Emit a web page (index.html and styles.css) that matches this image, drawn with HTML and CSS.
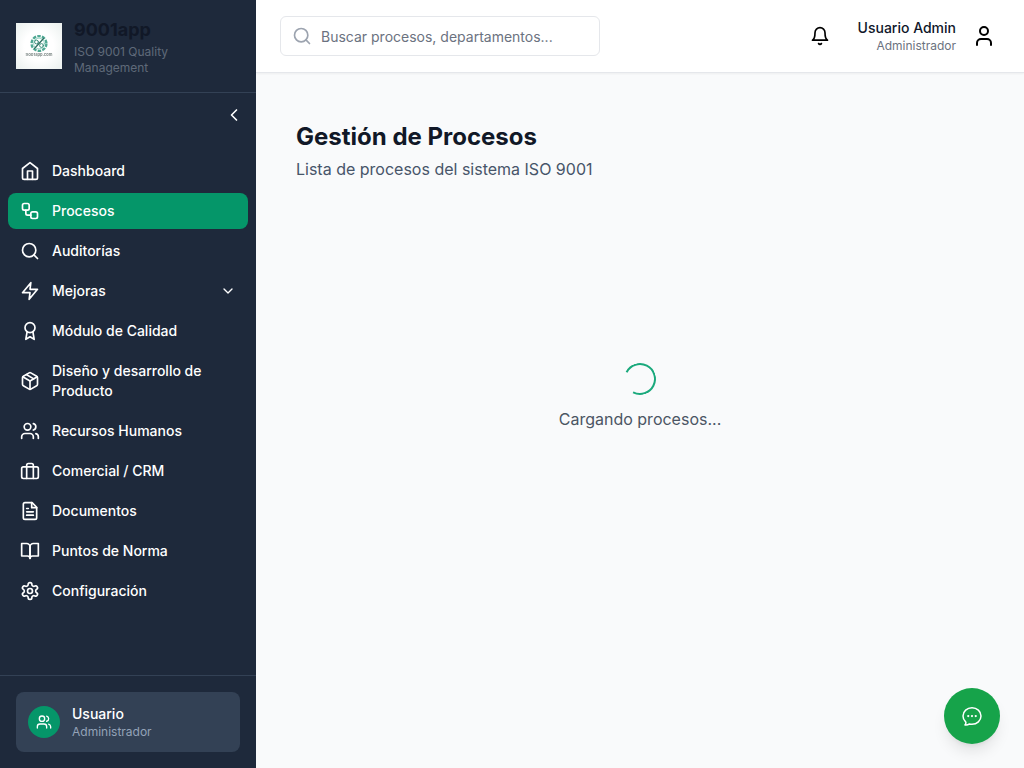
FILE: index.html
```html
<!DOCTYPE html>
<html lang="es">
<head>
    <meta charset="UTF-8">
    <meta name="viewport" content="width=device-width, initial-scale=1.0">
    <title>9001app - Procesos</title>
    <link rel="stylesheet" href="styles.css">
</head>
<body>

    <!-- Sidebar -->
    <aside class="sidebar">
        <div class="brand">
            <div class="brand-logo">
                <svg viewBox="0 0 46 46" width="46" height="46">
                    <circle class="logo-gear" cx="23" cy="20.5" r="7.4"/>
                    <circle class="logo-ring" cx="23" cy="20.5" r="5.4"/>
                    <path class="logo-bar" d="M18.5 25.5 27.5 15.5"/>
                    <circle class="logo-dot" cx="20.5" cy="19" r="1.9"/>
                    <circle class="logo-dot" cx="25.5" cy="22.5" r="1.9"/>
                    <text x="23" y="33" class="brand-logo-text">9001app.com</text>
                </svg>
            </div>
            <div class="brand-text">
                <div class="brand-name">9001app</div>
                <div class="brand-sub">ISO 9001 Quality Management</div>
            </div>
        </div>

        <div class="collapse-row">
            <svg class="icon" viewBox="0 0 24 24"><path d="m15 18-6-6 6-6"/></svg>
        </div>

        <nav class="menu">
            <a class="menu-item" href="#">
                <svg class="icon" viewBox="0 0 24 24"><path d="m3 9 9-7 9 7v11a2 2 0 0 1-2 2H5a2 2 0 0 1-2-2z"/><polyline points="9 22 9 12 15 12 15 22"/></svg>
                <span>Dashboard</span>
            </a>
            <a class="menu-item active" href="#">
                <svg class="icon" viewBox="0 0 24 24"><rect width="8" height="8" x="3" y="3" rx="2"/><path d="M7 11v4a2 2 0 0 0 2 2h4"/><rect width="8" height="8" x="13" y="13" rx="2"/></svg>
                <span>Procesos</span>
            </a>
            <a class="menu-item" href="#">
                <svg class="icon" viewBox="0 0 24 24"><circle cx="11" cy="11" r="8"/><path d="m21 21-4.3-4.3"/></svg>
                <span>Auditorías</span>
            </a>
            <a class="menu-item" href="#">
                <svg class="icon" viewBox="0 0 24 24"><polygon points="13 2 3 14 12 14 11 22 21 10 12 10 13 2"/></svg>
                <span>Mejoras</span>
                <svg class="icon-sm menu-caret" viewBox="0 0 24 24"><path d="m6 9 6 6 6-6"/></svg>
            </a>
            <a class="menu-item" href="#">
                <svg class="icon" viewBox="0 0 24 24"><circle cx="12" cy="8" r="6"/><path d="M15.477 12.89 17 22l-5-3-5 3 1.523-9.11"/></svg>
                <span>Módulo de Calidad</span>
            </a>
            <a class="menu-item" href="#">
                <svg class="icon" viewBox="0 0 24 24"><path d="m7.5 4.27 9 5.15"/><path d="M21 8a2 2 0 0 0-1-1.73l-7-4a2 2 0 0 0-2 0l-7 4A2 2 0 0 0 3 8v8a2 2 0 0 0 1 1.73l7 4a2 2 0 0 0 2 0l7-4A2 2 0 0 0 21 16Z"/><path d="m3.3 7 8.7 5 8.7-5"/><path d="M12 22V12"/></svg>
                <span>Diseño y desarrollo de Producto</span>
            </a>
            <a class="menu-item" href="#">
                <svg class="icon" viewBox="0 0 24 24"><path d="M16 21v-2a4 4 0 0 0-4-4H6a4 4 0 0 0-4 4v2"/><circle cx="9" cy="7" r="4"/><path d="M22 21v-2a4 4 0 0 0-3-3.87"/><path d="M16 3.13a4 4 0 0 1 0 7.75"/></svg>
                <span>Recursos Humanos</span>
            </a>
            <a class="menu-item" href="#">
                <svg class="icon" viewBox="0 0 24 24"><rect width="20" height="14" x="2" y="7" rx="2" ry="2"/><path d="M16 21V5a2 2 0 0 0-2-2h-4a2 2 0 0 0-2 2v16"/></svg>
                <span>Comercial / CRM</span>
            </a>
            <a class="menu-item" href="#">
                <svg class="icon" viewBox="0 0 24 24"><path d="M14.5 2H6a2 2 0 0 0-2 2v16a2 2 0 0 0 2 2h12a2 2 0 0 0 2-2V7.5L14.5 2z"/><polyline points="14 2 14 8 20 8"/><line x1="16" x2="8" y1="13" y2="13"/><line x1="16" x2="8" y1="17" y2="17"/><line x1="10" x2="8" y1="9" y2="9"/></svg>
                <span>Documentos</span>
            </a>
            <a class="menu-item" href="#">
                <svg class="icon" viewBox="0 0 24 24"><path d="M2 3h6a4 4 0 0 1 4 4v14a3 3 0 0 0-3-3H2z"/><path d="M22 3h-6a4 4 0 0 0-4 4v14a3 3 0 0 1 3-3h7z"/></svg>
                <span>Puntos de Norma</span>
            </a>
            <a class="menu-item" href="#">
                <svg class="icon" viewBox="0 0 24 24"><path d="M12.22 2h-.44a2 2 0 0 0-2 2v.18a2 2 0 0 1-1 1.73l-.43.25a2 2 0 0 1-2 0l-.15-.08a2 2 0 0 0-2.73.73l-.22.38a2 2 0 0 0 .73 2.73l.15.1a2 2 0 0 1 1 1.72v.51a2 2 0 0 1-1 1.74l-.15.09a2 2 0 0 0-.73 2.73l.22.38a2 2 0 0 0 2.73.73l.15-.08a2 2 0 0 1 2 0l.43.25a2 2 0 0 1 1 1.73V20a2 2 0 0 0 2 2h.44a2 2 0 0 0 2-2v-.18a2 2 0 0 1 1-1.73l.43-.25a2 2 0 0 1 2 0l.15.08a2 2 0 0 0 2.73-.73l.22-.39a2 2 0 0 0-.73-2.73l-.15-.08a2 2 0 0 1-1-1.74v-.5a2 2 0 0 1 1-1.74l.15-.09a2 2 0 0 0 .73-2.73l-.22-.38a2 2 0 0 0-2.73-.73l-.15.08a2 2 0 0 1-2 0l-.43-.25a2 2 0 0 1-1-1.73V4a2 2 0 0 0-2-2z"/><circle cx="12" cy="12" r="3"/></svg>
                <span>Configuración</span>
            </a>
        </nav>

        <div class="sidebar-footer">
            <div class="user-card">
                <div class="user-avatar">
                    <svg class="icon-sm" viewBox="0 0 24 24"><path d="M16 21v-2a4 4 0 0 0-4-4H6a4 4 0 0 0-4 4v2"/><circle cx="9" cy="7" r="4"/><path d="M22 21v-2a4 4 0 0 0-3-3.87"/><path d="M16 3.13a4 4 0 0 1 0 7.75"/></svg>
                </div>
                <div>
                    <div class="user-card-name">Usuario</div>
                    <div class="user-card-role">Administrador</div>
                </div>
            </div>
        </div>
    </aside>

    <div class="page">
        <!-- Top bar -->
        <header class="topbar">
            <label class="search">
                <svg class="search-icon" viewBox="0 0 24 24"><circle cx="11" cy="11" r="8"/><path d="m21 21-4.3-4.3"/></svg>
                <input type="text" placeholder="Buscar procesos, departamentos...">
            </label>
            <div class="topbar-right">
                <svg class="icon" viewBox="0 0 24 24"><path d="M6 8a6 6 0 0 1 12 0c0 7 3 9 3 9H3s3-2 3-9"/><path d="M10.3 21a1.94 1.94 0 0 0 3.4 0"/></svg>
                <div class="topbar-user">
                    <div class="topbar-user-name">Usuario Admin</div>
                    <div class="topbar-user-role">Administrador</div>
                </div>
                <svg class="icon-lg" viewBox="0 0 24 24"><path d="M19 21v-2a4 4 0 0 0-4-4H9a4 4 0 0 0-4 4v2"/><circle cx="12" cy="7" r="4"/></svg>
            </div>
        </header>

        <main class="content">
            <h1>Gestión de Procesos</h1>
            <p class="subtitle">Lista de procesos del sistema ISO 9001</p>

            <div class="loading">
                <div class="spinner"></div>
                <p>Cargando procesos...</p>
            </div>
        </main>
    </div>

    <button class="chat-btn" type="button" aria-label="Chat">
        <svg viewBox="0 0 24 24"><path d="M8.625 12a.375.375 0 1 1-.75 0 .375.375 0 0 1 .75 0Zm0 0H8.25m4.125 0a.375.375 0 1 1-.75 0 .375.375 0 0 1 .75 0Zm0 0H12m4.125 0a.375.375 0 1 1-.75 0 .375.375 0 0 1 .75 0Zm0 0h-.375M21 12c0 4.556-4.03 8.25-9 8.25a9.764 9.764 0 0 1-2.555-.337A5.972 5.972 0 0 1 5.41 20.97a5.969 5.969 0 0 1-.474-.065 4.48 4.48 0 0 0 .978-2.025c.09-.457-.133-.901-.467-1.226C3.93 16.178 3 14.189 3 12c0-4.556 4.03-8.25 9-8.25s9 3.694 9 8.25Z"/></svg>
    </button>

</body>
</html>
```

FILE: styles.css
```css
* {
    box-sizing: border-box;
}

html {
    background-color: #f9fafb;
}

body {
    font-family: Inter, "Liberation Sans", sans-serif;
    background-color: #f9fafb;
    margin: 0;
    height: 768px;
    display: flex;
}

svg {
    fill: none;
    stroke: currentColor;
    stroke-width: 2;
    stroke-linecap: round;
    stroke-linejoin: round;
    flex-shrink: 0;
}

.icon {
    width: 20px;
    height: 20px;
}

.icon-sm {
    width: 16px;
    height: 16px;
}

.icon-lg {
    width: 24px;
    height: 24px;
}

/* Sidebar */
.sidebar {
    width: 256px;
    flex-shrink: 0;
    background-color: #1e293b;
    color: white;
    display: flex;
    flex-direction: column;
}

.brand {
    height: 93px;
    padding: 0 16px;
    display: flex;
    align-items: center;
    gap: 12px;
    border-bottom: 1px solid #334155;
}

.brand-logo {
    width: 46px;
    height: 46px;
    flex-shrink: 0;
    background: radial-gradient(circle, #ffffff 45%, #eaf0ee 100%);
}

.brand-logo svg {
    display: block;
    filter: blur(0.4px);
}

.logo-gear {
    stroke: #4fa893;
    stroke-width: 2.4;
    stroke-dasharray: 3.5 1.2;
    stroke-linecap: butt;
}

.logo-ring {
    stroke: #7cc9b4;
    stroke-width: 0.8;
}

.logo-bar {
    stroke: #2f6f61;
    stroke-width: 1.3;
}

.logo-dot {
    stroke: #3f8f7c;
    stroke-width: 1;
}

.brand-logo-text {
    font-size: 4px;
    font-weight: 700;
    fill: #7d8886;
    stroke: none;
    text-anchor: middle;
}

.brand-name {
    font-size: 18px;
    line-height: 28px;
    font-weight: 700;
    color: #111827;
}

.brand-sub {
    font-size: 12px;
    line-height: 16px;
    color: #5f6979;
}

.collapse-row {
    display: flex;
    justify-content: flex-end;
    padding: 12px 12px 0;
    height: 60px;
}

.menu {
    padding: 0 8px;
    display: flex;
    flex-direction: column;
    gap: 4px;
}

.menu-item {
    display: flex;
    align-items: center;
    gap: 12px;
    padding: 8px 12px;
    border-radius: 8px;
    color: white;
    text-decoration: none;
    font-size: 14px;
    line-height: 20px;
    font-weight: 500;
}

.menu-item.active {
    background-color: #059669;
}

.menu-caret {
    margin-left: auto;
}

.sidebar-footer {
    margin-top: auto;
    padding: 16px;
    border-top: 1px solid #334155;
}

.user-card {
    height: 60px;
    padding: 0 12px;
    display: flex;
    align-items: center;
    gap: 12px;
    border-radius: 8px;
    background-color: #334155;
}

.user-avatar {
    width: 32px;
    height: 32px;
    border-radius: 50%;
    background-color: #059669;
    display: flex;
    align-items: center;
    justify-content: center;
}

.user-card-name {
    font-size: 14px;
    line-height: 20px;
    font-weight: 500;
}

.user-card-role {
    font-size: 12px;
    line-height: 16px;
    color: #94a3b8;
}

/* Top bar and content */
.page {
    flex: 1;
    min-width: 0;
    display: flex;
    flex-direction: column;
}

.topbar {
    height: 73px;
    padding: 0 28px 0 24px;
    display: flex;
    align-items: center;
    justify-content: space-between;
    background-color: white;
    border-bottom: 1px solid #e5e7eb;
    box-shadow: 0 1px 2px rgba(0, 0, 0, 0.05);
}

.search {
    width: 320px;
    height: 40px;
    padding: 0 12px 0 11px;
    display: flex;
    align-items: center;
    gap: 9px;
    background-color: white;
    border: 1px solid #e5e7eb;
    border-radius: 6px;
}

.search-icon {
    width: 20px;
    height: 20px;
    color: #9ca3af;
}

.search input {
    flex: 1;
    min-width: 0;
    border: none;
    outline: none;
    padding: 0;
    font-family: inherit;
    font-size: 14px;
    background: transparent;
}

.search input::placeholder {
    color: #6b7280;
}

.topbar-right {
    display: flex;
    align-items: center;
    gap: 16px;
    color: #000;
}

.topbar-user {
    margin-left: 12px;
    text-align: right;
}

.topbar-user-name {
    font-size: 14px;
    line-height: 20px;
    font-weight: 500;
    color: #0f172a;
}

.topbar-user-role {
    font-size: 12px;
    line-height: 16px;
    color: #6b7280;
}

.content {
    flex: 1;
    padding: 48px 40px 0;
}

h1 {
    margin: 0;
    font-size: 24px;
    line-height: 32px;
    font-weight: 700;
    color: #111827;
}

.subtitle {
    margin: 4px 0 0;
    font-size: 16px;
    line-height: 24px;
    color: #475569;
}

.loading {
    margin-top: 182px;
    display: flex;
    flex-direction: column;
    align-items: center;
    gap: 12px;
}

.loading p {
    margin: 0;
    font-size: 16px;
    line-height: 24px;
    color: #4b5563;
}

/* stopped at the angle of the capture */
.spinner {
    width: 32px;
    height: 32px;
    border-radius: 50%;
    border: 2px solid #1aa97c;
    border-left-color: transparent;
    transform: rotate(-18deg);
}

.chat-btn {
    position: fixed;
    right: 24px;
    bottom: 24px;
    width: 56px;
    height: 56px;
    border: none;
    border-radius: 50%;
    background-color: #16a34a;
    color: white;
    display: flex;
    align-items: center;
    justify-content: center;
    box-shadow: 0 10px 15px -3px rgba(0, 0, 0, 0.1), 0 4px 6px -4px rgba(0, 0, 0, 0.1);
    cursor: pointer;
}

.chat-btn svg {
    width: 24px;
    height: 24px;
    stroke-width: 1.5;
}
```
